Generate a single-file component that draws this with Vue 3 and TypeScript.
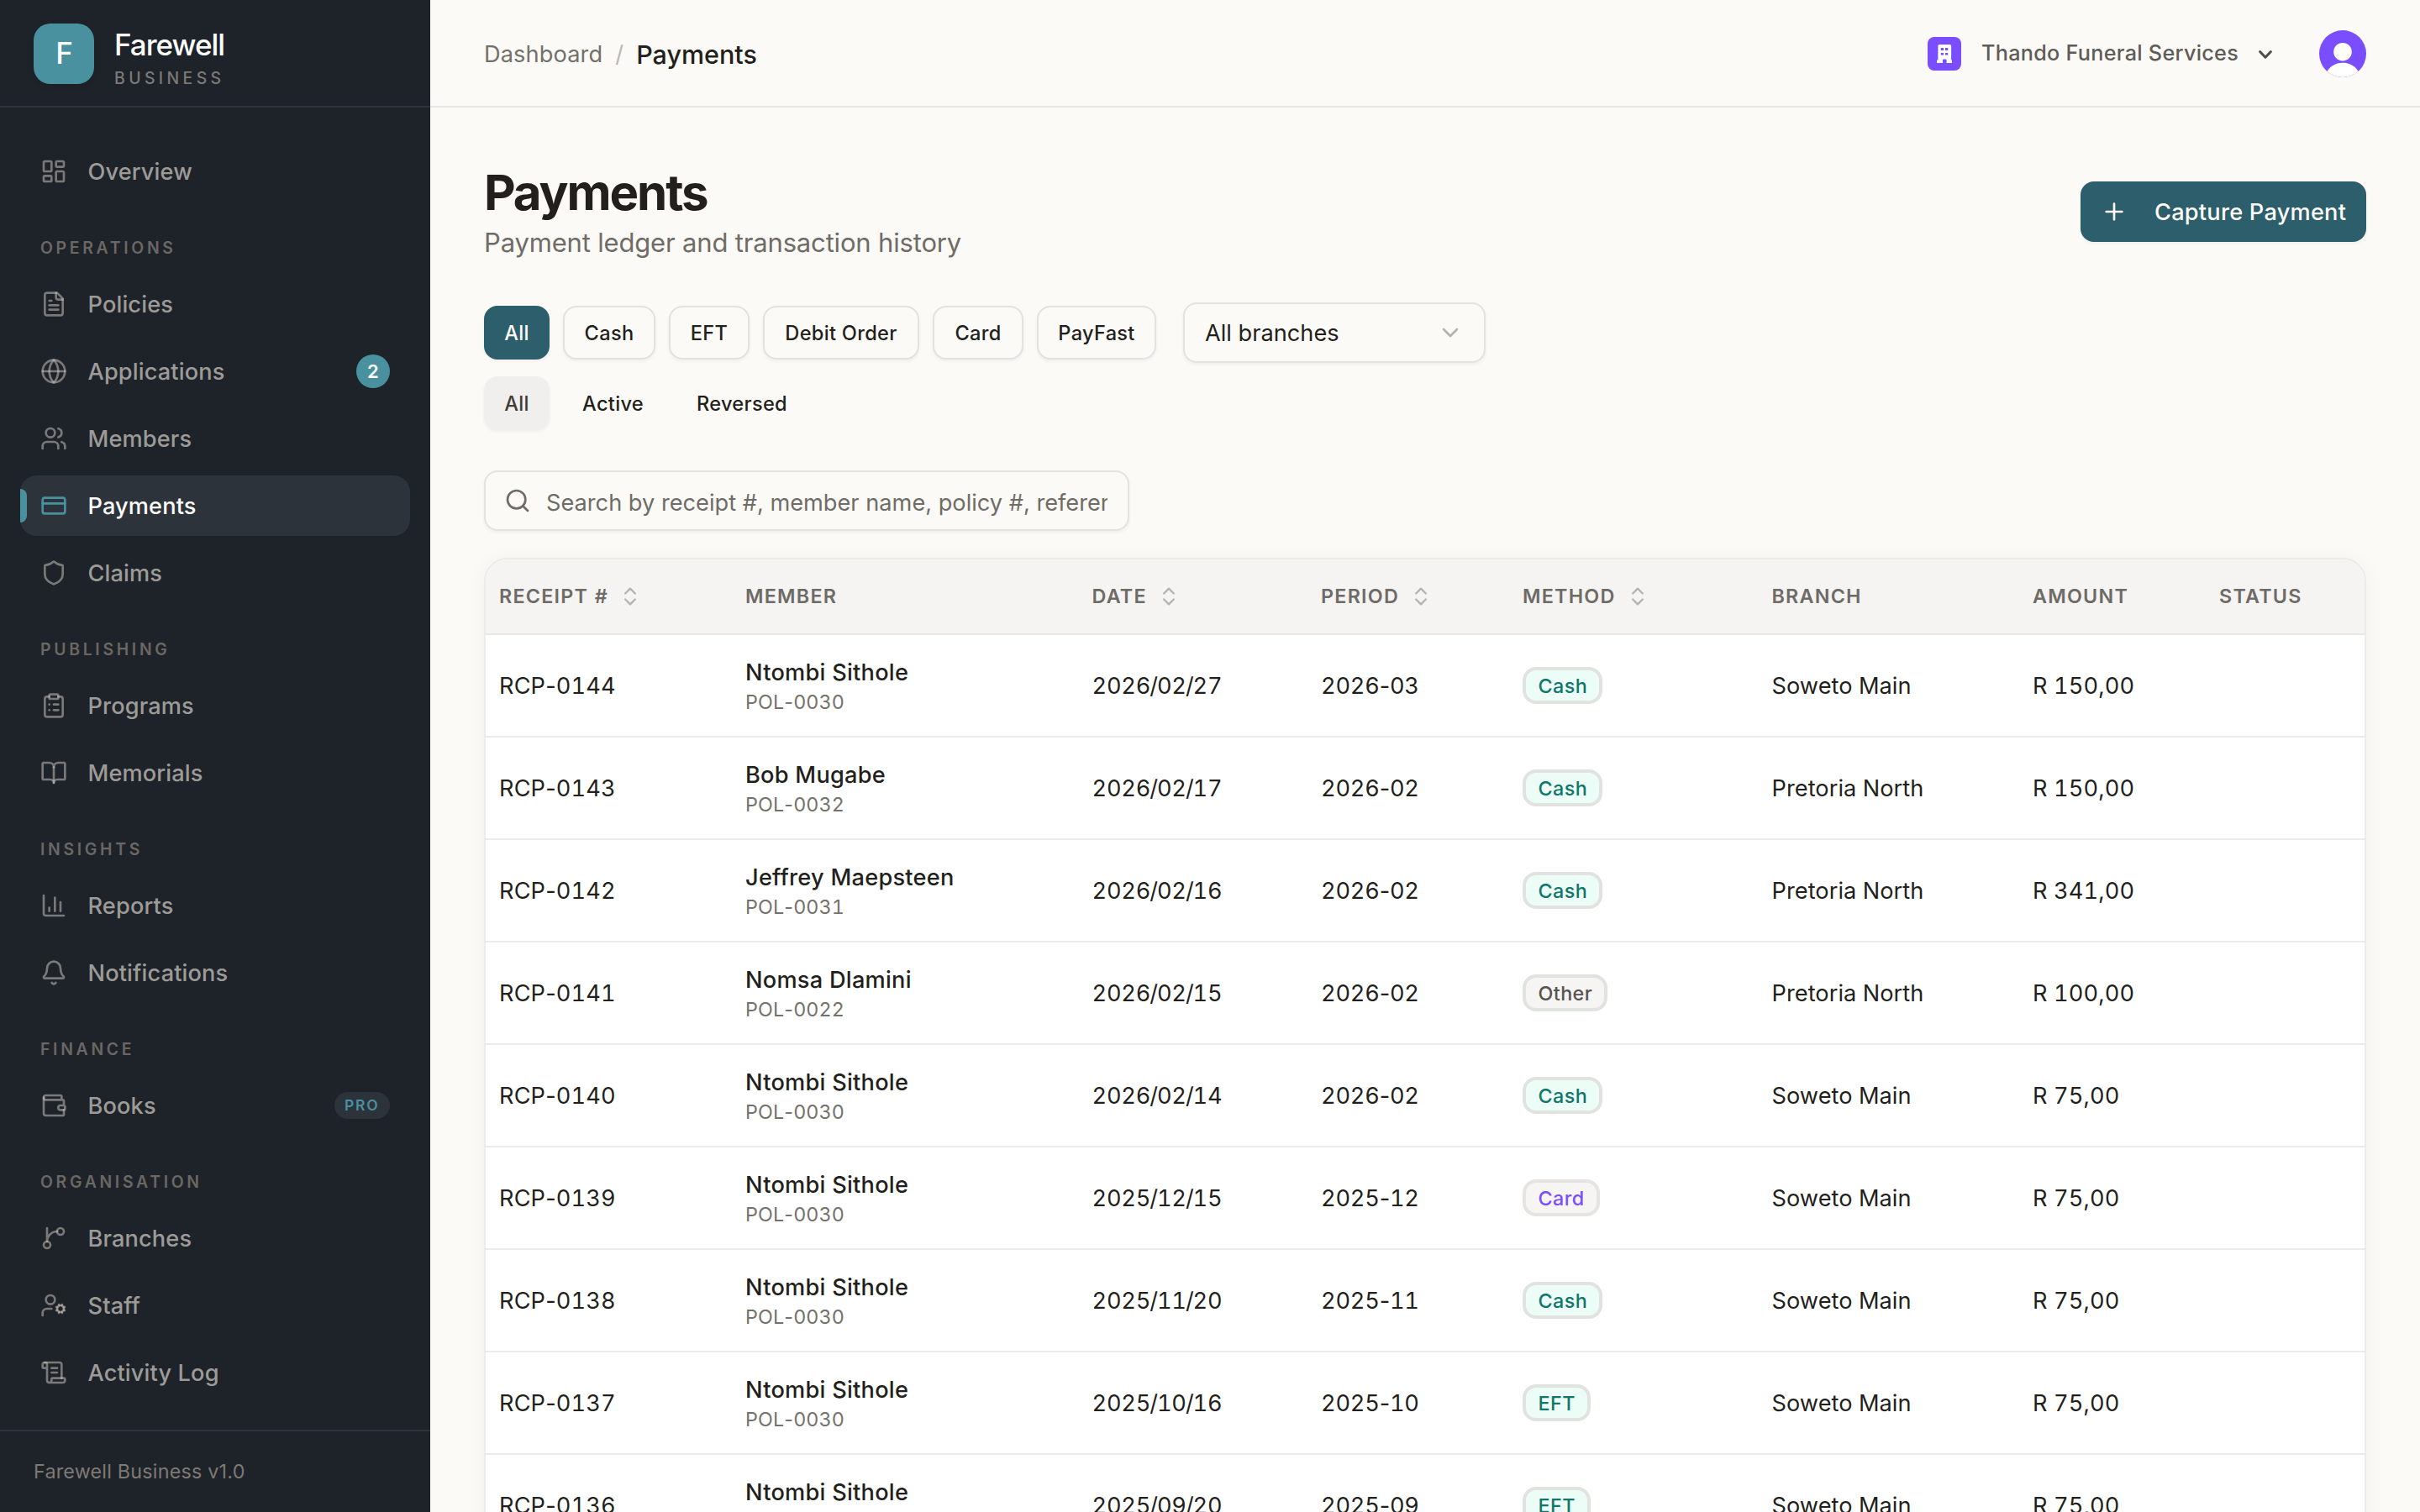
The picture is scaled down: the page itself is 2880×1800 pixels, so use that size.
<script setup lang="ts">
interface NavItem {
  label: string
  icon: string[]
  count?: number
  tag?: string
  active?: boolean
}
interface NavGroup {
  title?: string
  items: NavItem[]
}
type Method = 'Cash' | 'Other' | 'Card' | 'EFT'
interface Payment {
  receipt: string
  member: string
  policy: string
  date: string
  period: string
  method: Method
  branch: string
  amount: string
}

const groups: NavGroup[] = [
  {
    items: [
      {
        label: 'Overview',
        icon: [
          'M4 3h5a1 1 0 0 1 1 1v7a1 1 0 0 1-1 1H4a1 1 0 0 1-1-1V4a1 1 0 0 1 1-1z',
          'M15 3h5a1 1 0 0 1 1 1v3a1 1 0 0 1-1 1h-5a1 1 0 0 1-1-1V4a1 1 0 0 1 1-1z',
          'M15 12h5a1 1 0 0 1 1 1v7a1 1 0 0 1-1 1h-5a1 1 0 0 1-1-1v-7a1 1 0 0 1 1-1z',
          'M4 16h5a1 1 0 0 1 1 1v3a1 1 0 0 1-1 1H4a1 1 0 0 1-1-1v-3a1 1 0 0 1 1-1z',
        ],
      },
    ],
  },
  {
    title: 'OPERATIONS',
    items: [
      {
        label: 'Policies',
        icon: [
          'M15 2H6a2 2 0 0 0-2 2v16a2 2 0 0 0 2 2h12a2 2 0 0 0 2-2V7Z',
          'M14 2v4a2 2 0 0 0 2 2h4',
          'M10 9H8',
          'M16 13H8',
          'M16 17H8',
        ],
      },
      {
        label: 'Applications',
        count: 2,
        icon: [
          'M12 2a10 10 0 1 0 0 20a10 10 0 1 0 0-20z',
          'M12 2a14.5 14.5 0 0 0 0 20 14.5 14.5 0 0 0 0-20',
          'M2 12h20',
        ],
      },
      {
        label: 'Members',
        icon: [
          'M16 21v-2a4 4 0 0 0-4-4H6a4 4 0 0 0-4 4v2',
          'M9 3a4 4 0 1 0 0 8a4 4 0 1 0 0-8z',
          'M22 21v-2a4 4 0 0 0-3-3.87',
          'M16 3.13a4 4 0 0 1 0 7.75',
        ],
      },
      {
        label: 'Payments',
        active: true,
        icon: [
          'M4 5h16a2 2 0 0 1 2 2v10a2 2 0 0 1-2 2H4a2 2 0 0 1-2-2V7a2 2 0 0 1 2-2z',
          'M2 10h20',
        ],
      },
      {
        label: 'Claims',
        icon: [
          'M20 13c0 5-3.5 7.5-7.66 8.95a1 1 0 0 1-.67-.01C7.5 20.5 4 18 4 13V6a1 1 0 0 1 1-1c2 0 4.5-1.2 6.24-2.72a1.17 1.17 0 0 1 1.52 0C14.51 3.81 17 5 19 5a1 1 0 0 1 1 1z',
        ],
      },
    ],
  },
  {
    title: 'PUBLISHING',
    items: [
      {
        label: 'Programs',
        icon: [
          'M9 2h6a1 1 0 0 1 1 1v2a1 1 0 0 1-1 1H9a1 1 0 0 1-1-1V3a1 1 0 0 1 1-1z',
          'M16 4h2a2 2 0 0 1 2 2v14a2 2 0 0 1-2 2H6a2 2 0 0 1-2-2V6a2 2 0 0 1 2-2h2',
          'M12 11h4',
          'M12 16h4',
          'M8 11h.01',
          'M8 16h.01',
        ],
      },
      {
        label: 'Memorials',
        icon: [
          'M12 7v14',
          'M3 18a1 1 0 0 1-1-1V4a1 1 0 0 1 1-1h5a4 4 0 0 1 4 4 4 4 0 0 1 4-4h5a1 1 0 0 1 1 1v13a1 1 0 0 1-1 1h-6a3 3 0 0 0-3 3 3 3 0 0 0-3-3z',
        ],
      },
    ],
  },
  {
    title: 'INSIGHTS',
    items: [
      {
        label: 'Reports',
        icon: ['M3 3v16a2 2 0 0 0 2 2h16', 'M18 17V9', 'M13 17V5', 'M8 17v-3'],
      },
      {
        label: 'Notifications',
        icon: [
          'M10.268 21a2 2 0 0 0 3.464 0',
          'M3.262 15.326A1 1 0 0 0 4 17h16a1 1 0 0 0 .74-1.673C19.41 13.956 18 12.499 18 8A6 6 0 0 0 6 8c0 4.499-1.411 5.956-2.738 7.326',
        ],
      },
    ],
  },
  {
    title: 'FINANCE',
    items: [
      {
        label: 'Books',
        tag: 'PRO',
        icon: [
          'M19 7V4a1 1 0 0 0-1-1H5a2 2 0 0 0 0 4h15a1 1 0 0 1 1 1v4h-3a2 2 0 0 0 0 4h3a1 1 0 0 0 1-1v-2a1 1 0 0 0-1-1',
          'M3 5v14a2 2 0 0 0 2 2h15a1 1 0 0 0 1-1v-4',
        ],
      },
    ],
  },
  {
    title: 'ORGANISATION',
    items: [
      {
        label: 'Branches',
        icon: [
          'M15 6a9 9 0 0 0-9 9V3',
          'M18 3a3 3 0 1 0 0 6a3 3 0 1 0 0-6z',
          'M6 15a3 3 0 1 0 0 6a3 3 0 1 0 0-6z',
        ],
      },
      {
        label: 'Staff',
        icon: [
          'M10 15H6a4 4 0 0 0-4 4v2',
          'M9 3a4 4 0 1 0 0 8a4 4 0 1 0 0-8z',
          'M18 12a3 3 0 1 0 0 6a3 3 0 1 0 0-6z',
          'm14.305 16.53.923-.382',
          'm15.228 13.852-.923-.383',
          'm16.852 12.228-.383-.923',
          'm16.852 17.772-.383.924',
          'm19.148 12.228.383-.923',
          'm19.53 18.696-.382-.924',
          'm20.772 13.852.924-.383',
          'm20.772 16.148.924.383',
        ],
      },
      {
        label: 'Activity Log',
        icon: [
          'M15 12h-5',
          'M15 8h-5',
          'M19 17V5a2 2 0 0 0-2-2H4',
          'M8 21h12a2 2 0 0 0 2-2v-1a1 1 0 0 0-1-1H11a1 1 0 0 0-1 1v1a2 2 0 1 1-4 0V5a2 2 0 1 0-4 0v2a1 1 0 0 0 1 1h3',
        ],
      },
    ],
  },
]

const methods = [
  { label: 'All', width: 78 },
  { label: 'Cash', width: 110 },
  { label: 'EFT', width: 96 },
  { label: 'Debit Order', width: 186 },
  { label: 'Card', width: 108 },
  { label: 'PayFast', width: 142 },
]
const states = [
  { label: 'All', width: 78 },
  { label: 'Active', width: 119 },
  { label: 'Reversed', width: 156 },
]

const columns = [
  { label: 'RECEIPT #', sortable: true },
  { label: 'MEMBER', sortable: false },
  { label: 'DATE', sortable: true },
  { label: 'PERIOD', sortable: true },
  { label: 'METHOD', sortable: true },
  { label: 'BRANCH', sortable: false },
  { label: 'AMOUNT', sortable: false },
  { label: 'STATUS', sortable: false },
]

function pay(
  receipt: string,
  member: string,
  policy: string,
  date: string,
  period: string,
  method: Method,
  branch: string,
  amount: string,
): Payment {
  return { receipt, member, policy, date, period, method, branch, amount }
}

const payments: Payment[] = [
  pay('RCP-0144', 'Ntombi Sithole', 'POL-0030', '2026/02/27', '2026-03', 'Cash', 'Soweto Main', 'R 150,00'),
  pay('RCP-0143', 'Bob Mugabe', 'POL-0032', '2026/02/17', '2026-02', 'Cash', 'Pretoria North', 'R 150,00'),
  pay('RCP-0142', 'Jeffrey Maepsteen', 'POL-0031', '2026/02/16', '2026-02', 'Cash', 'Pretoria North', 'R 341,00'),
  pay('RCP-0141', 'Nomsa Dlamini', 'POL-0022', '2026/02/15', '2026-02', 'Other', 'Pretoria North', 'R 100,00'),
  pay('RCP-0140', 'Ntombi Sithole', 'POL-0030', '2026/02/14', '2026-02', 'Cash', 'Soweto Main', 'R 75,00'),
  pay('RCP-0139', 'Ntombi Sithole', 'POL-0030', '2025/12/15', '2025-12', 'Card', 'Soweto Main', 'R 75,00'),
  pay('RCP-0138', 'Ntombi Sithole', 'POL-0030', '2025/11/20', '2025-11', 'Cash', 'Soweto Main', 'R 75,00'),
  pay('RCP-0137', 'Ntombi Sithole', 'POL-0030', '2025/10/16', '2025-10', 'EFT', 'Soweto Main', 'R 75,00'),
  pay('RCP-0136', 'Ntombi Sithole', 'POL-0030', '2025/09/20', '2025-09', 'EFT', 'Soweto Main', 'R 75,00'),
]

// Digits are tabular; separators keep their proportional width.
function parts(text: string): string[] {
  return text.split(/([-/])/)
}
function isSeparator(part: string): boolean {
  return part === '-' || part === '/'
}
</script>

<template>
  <div class="app">
    <aside class="sidebar">
      <div class="brand">
        <div class="brand-mark">F</div>
        <div class="brand-text">
          <div class="brand-name">Farewell</div>
          <div class="brand-sub">BUSINESS</div>
        </div>
      </div>
      <nav class="nav">
        <section v-for="(g, gi) in groups" :key="gi" class="group">
          <h2 v-if="g.title" class="group-title">{{ g.title }}</h2>
          <a v-for="n in g.items" :key="n.label" class="nav-item" :class="{ active: n.active }">
            <svg class="icon" viewBox="0 0 24 24">
              <path v-for="(d, i) in n.icon" :key="i" :d="d" />
            </svg>
            <span class="nav-label">{{ n.label }}</span>
            <span v-if="n.count" class="count">{{ n.count }}</span>
            <span v-if="n.tag" class="tag">{{ n.tag }}</span>
          </a>
        </section>
      </nav>
      <div class="sidebar-foot">Farewell Business v1.0</div>
    </aside>

    <div class="content">
      <header class="topbar">
        <div class="crumbs">
          <span class="crumb">Dashboard</span>
          <span class="slash">/</span>
          <span class="crumb-current">Payments</span>
        </div>
        <div class="account">
          <svg class="org" viewBox="0 0 40 40">
            <rect width="40" height="40" rx="8" fill="#7a4dff" />
            <path
              fill="#fff"
              fill-rule="evenodd"
              d="M14 9h12.5a1.6 1.6 0 0 1 1.6 1.6V27.6H29V31H22.6V27.4a1 1 0 0 0-1-1h-2.6a1 1 0 0 0-1 1V31H11V27.6h1.4V10.6A1.6 1.6 0 0 1 14 9zM15.8 13v3h3.2v-3zM21 13v3h3.2v-3zM15.8 19v2.6h3.2V19zM21 19v2.6h3.2V19z"
            />
          </svg>
          <span class="org-name">Thando Funeral Services</span>
          <svg class="org-caret" viewBox="0 0 20 14"><path d="M3.6 3.5 10 10.2l6.4-6.7" /></svg>
          <svg class="avatar" viewBox="0 0 56 56">
            <defs>
              <clipPath id="avatar-clip"><circle cx="28" cy="28" r="28" /></clipPath>
            </defs>
            <g clip-path="url(#avatar-clip)">
              <rect width="56" height="56" fill="#7a4dff" />
              <circle cx="28" cy="25.7" r="10.8" fill="#fff" />
              <path d="M8 52c3.5-8.6 11-13.2 20-13.2S44.500 43.400 48 52v6H8z" fill="#fff" />
            </g>
          </svg>
        </div>
      </header>

      <main class="main">
        <div class="page-head">
          <div>
            <h1 class="title">Payments</h1>
            <p class="subtitle">Payment ledger and transaction history</p>
          </div>
          <button class="primary">
            <svg class="icon" viewBox="0 0 24 24"><path d="M5 12h14" /><path d="M12 5v14" /></svg>
            <span>Capture Payment</span>
          </button>
        </div>

        <div class="filters">
          <div class="filter-row">
            <button
              v-for="(m, i) in methods"
              :key="m.label"
              class="chip"
              :class="{ selected: i === 0 }"
              :style="{ width: m.width + 'px' }"
            >
              {{ m.label }}
            </button>
            <div class="select">
              <span>All branches</span>
              <svg class="icon" viewBox="0 0 24 24"><path d="m6 9 6 6 6-6" /></svg>
            </div>
          </div>
          <div class="filter-row">
            <button
              v-for="(s, i) in states"
              :key="s.label"
              class="chip ghost"
              :class="{ current: i === 0 }"
              :style="{ width: s.width + 'px' }"
            >
              {{ s.label }}
            </button>
          </div>
        </div>

        <div class="search">
          <svg class="icon" viewBox="0 0 24 24"><circle cx="11" cy="11" r="8" /><path d="m21 21-4.300-4.300" /></svg>
          <span class="search-text">Search by receipt #, member name, policy #, reference…</span>
        </div>

        <div class="table">
          <div class="row head">
            <div v-for="c in columns" :key="c.label" class="cell th">
              <span>{{ c.label }}</span>
              <svg v-if="c.sortable" class="sort" viewBox="0 0 24 24">
                <path d="m7 15 5 5 5-5" />
                <path d="m7 9 5-5 5 5" />
              </svg>
            </div>
          </div>
          <div v-for="p in payments" :key="p.receipt" class="row">
            <div class="cell code">
              <span v-for="(t, i) in parts(p.receipt)" :key="i" :class="{ sep: isSeparator(t) }">{{ t }}</span>
            </div>
            <div class="cell member">
              <div class="member-name">{{ p.member }}</div>
              <div class="member-policy">
                <span v-for="(t, i) in parts(p.policy)" :key="i" :class="{ sep: isSeparator(t) }">{{ t }}</span>
              </div>
            </div>
            <div class="cell date">
              <span v-for="(t, i) in parts(p.date)" :key="i" :class="{ sep: isSeparator(t) }">{{ t }}</span>
            </div>
            <div class="cell period">
              <span v-for="(t, i) in parts(p.period)" :key="i" :class="{ sep: isSeparator(t) }">{{ t }}</span>
            </div>
            <div class="cell">
              <span class="badge" :class="'m-' + p.method.toLowerCase()">{{ p.method }}</span>
            </div>
            <div class="cell branch">{{ p.branch }}</div>
            <div class="cell amount">{{ p.amount }}</div>
            <div class="cell"></div>
          </div>
        </div>
      </main>
    </div>
  </div>
</template>

<style>
html,
body {
  margin: 0;
  background: #fcfaf6;
}
</style>

<style scoped>
* {
  box-sizing: border-box;
}
.app {
  display: flex;
  width: 2880px;
  height: 1800px;
  overflow: hidden;
  background: #fcfaf6;
  color: #231f1c;
  font-family: "Inter", "Liberation Sans", sans-serif;
  font-size: 27.2px;
  white-space: nowrap;
}
h1,
h2,
p {
  margin: 0;
}
button {
  font-family: inherit;
  border: 0;
  margin: 0;
}
svg {
  flex: none;
  display: block;
}
.icon {
  width: 32px;
  height: 32px;
  fill: none;
  stroke: currentColor;
  stroke-width: 2;
  stroke-linecap: round;
  stroke-linejoin: round;
}

/* Sidebar */
.sidebar {
  flex: none;
  width: 512px;
  display: flex;
  flex-direction: column;
  background: #1e2329;
}
.brand {
  flex: none;
  height: 128px;
  display: flex;
  align-items: flex-start;
  gap: 24px;
  padding: 28px 40px 0;
  border-bottom: 2px solid #2d323b;
}
.brand-mark {
  width: 72px;
  height: 72px;
  border-radius: 20px;
  background: #4a919f;
  color: #fdfcfa;
  font-size: 35px;
  font-weight: 500;
  line-height: 70px;
  text-align: center;
  padding-left: 1px;
  box-shadow: 0 2px 6px rgba(0, 0, 0, 0.1);
}
.brand-name {
  font-size: 35px;
  font-weight: 500;
  line-height: 50px;
  letter-spacing: -1.02px;
  color: #fdfcfa;
}
.brand-sub {
  font-size: 19.4px;
  font-weight: 500;
  line-height: 30px;
  letter-spacing: 4.4px;
  color: #7d7975;
}
.nav {
  flex: 1;
  padding: 40px 24px 0;
}
.group {
  display: flex;
  flex-direction: column;
  gap: 8px;
}
.group + .group {
  margin-top: 40px;
}
.group-title {
  margin-bottom: 8px;
  padding-left: 24px;
  font-size: 19.4px;
  font-weight: 600;
  line-height: 31px;
  height: 30px;
  letter-spacing: 3.7px;
  color: #6b6762;
}
.nav-item {
  position: relative;
  height: 72px;
  display: flex;
  align-items: center;
  gap: 24.5px;
  padding: 0 24px;
  border-radius: 20px;
  color: #9d9b98;
  font-weight: 500;
  letter-spacing: 0.12px;
}
.nav-item .icon {
  stroke: rgba(214, 208, 200, 0.5);
}
.nav-label {
  flex: 1;
}
.nav-item.active {
  background: #2d333a;
  color: #fdfcfa;
}
.nav-item.active .icon {
  stroke: #4a919f;
}
.nav-item.active::before {
  content: "";
  position: absolute;
  left: 0;
  top: 16px;
  width: 8px;
  height: 40px;
  border-radius: 0 8px 8px 0;
  background: #4a919f;
}
.count {
  width: 40px;
  height: 40px;
  border-radius: 20px;
  background: #4a919f;
  color: #fdfcfa;
  font-size: 22px;
  font-weight: 600;
  line-height: 40px;
  text-align: center;
}
.tag {
  width: 66px;
  height: 32px;
  border-radius: 16px;
  background: #2d333a;
  color: #4a919f;
  font-size: 17.5px;
  font-weight: 600;
  line-height: 32px;
  letter-spacing: 1.8px;
  padding-left: 12px;
}
.sidebar-foot {
  flex: none;
  height: 98px;
  border-top: 2px solid #2d323b;
  padding-left: 40px;
  font-size: 23.3px;
  line-height: 96px;
  letter-spacing: 0.22px;
  color: #7d7975;
}

/* Top bar */
.content {
  flex: 1;
  min-width: 0;
}
.topbar {
  height: 128px;
  display: flex;
  align-items: center;
  justify-content: space-between;
  padding: 0 64px;
  border-bottom: 2px solid #e8e7e5;
}
.crumbs {
  display: flex;
  align-items: center;
  padding-top: 2px;
}
.crumb {
  letter-spacing: 0.1px;
  color: #73706b;
}
.slash {
  width: 40px;
  text-align: center;
  color: #bab7b4;
}
.crumb-current {
  font-size: 30.5px;
  font-weight: 500;
}
.account {
  display: flex;
  align-items: center;
  padding-top: 2px;
}
.org {
  width: 40px;
  height: 40px;
}
.org-name {
  width: 307px;
  margin: -2px 0 0 24px;
  font-size: 25.2px;
  font-weight: 500;
  letter-spacing: 0.28px;
  color: #5f5c58;
}
.org-caret {
  width: 20px;
  height: 14px;
  margin: 2px 54px 0 21px;
  fill: none;
  stroke: #504c48;
  stroke-width: 3;
  stroke-linecap: round;
  stroke-linejoin: round;
}
.avatar {
  width: 56px;
  height: 56px;
}

/* Page */
.main {
  padding: 64px 64px 0;
}
.page-head {
  display: flex;
  align-items: center;
  justify-content: space-between;
}
.title {
  font-size: 58.2px;
  font-weight: 700;
  line-height: 75px;
  letter-spacing: -2.1px;
}
.subtitle {
  height: 45px;
  font-size: 31px;
  line-height: 43px;
  letter-spacing: -0.17px;
  color: #6f6c67;
}
.primary {
  width: 340px;
  height: 72px;
  display: flex;
  align-items: center;
  gap: 32px;
  padding: 0 0 0 24px;
  border-radius: 16px;
  background: #2c5f6b;
  color: #fdfbf7;
  font-size: 27.2px;
  font-weight: 500;
  letter-spacing: 0.23px;
  box-shadow: 0 2px 4px rgba(0, 0, 0, 0.05);
}
.filters {
  display: flex;
  flex-direction: column;
  gap: 16px;
  margin-top: 48px;
}
.filter-row {
  display: flex;
  align-items: center;
  gap: 16px;
}
.chip {
  height: 64px;
  padding: 0;
  border: 2px solid #e0e3e0;
  border-radius: 16px;
  background: #fcfaf7;
  color: #231f1c;
  font-size: 23.6px;
  font-weight: 500;
  letter-spacing: 0.3px;
  text-align: center;
  box-shadow: 0 2px 4px rgba(0, 0, 0, 0.05);
}
.chip.selected {
  border-color: #2c5f6b;
  background: #2c5f6b;
  color: #fdfbf7;
}
.chip.ghost {
  border-color: transparent;
  background: transparent;
  box-shadow: none;
}
.chip.ghost.current {
  border-color: #f0efed;
  background: #f0efed;
  color: #403c39;
  box-shadow: 0 2px 4px rgba(0, 0, 0, 0.05);
}
.select {
  width: 360px;
  height: 72px;
  margin-left: 16px;
  display: flex;
  align-items: center;
  justify-content: space-between;
  padding: 0 24px;
  border: 2px solid #e0e3e0;
  border-radius: 16px;
  box-shadow: 0 2px 4px rgba(0, 0, 0, 0.05);
}
.select .icon {
  color: #b5b3b0;
}
.search {
  width: 768px;
  height: 72px;
  margin-top: 48px;
  display: flex;
  align-items: center;
  gap: 18px;
  padding: 0 24px 0 22px;
  border: 2px solid #e0e3e0;
  border-radius: 16px;
  color: #6f6c67;
  box-shadow: 0 2px 4px rgba(0, 0, 0, 0.05);
}
.search-text {
  flex: 1;
  min-width: 0;
  padding-top: 5px;
  overflow: hidden;
  line-height: 40px;
}

/* Table */
.table {
  margin-top: 32px;
  border: 2px solid #ecebe9;
  border-radius: 28px;
  overflow: hidden;
  background: #fff;
  box-shadow: 0 4px 24px rgba(60, 50, 40, 0.05);
}
.row {
  display: grid;
  grid-template-columns: 293fr 412.5fr 272.5fr 240fr 296.5fr 310.5fr 222fr 189fr;
  align-items: center;
  height: 122px;
  border-bottom: 2px solid #ebebeb;
  font-feature-settings: "tnum";
}
.row.head {
  height: 90px;
  background: #f5f4f2;
  border-bottom-color: #e8e7e5;
}
.cell {
  padding: 0 16px;
  letter-spacing: 0.13px;
}
.cell.branch {
  letter-spacing: 0.05px;
}
.cell.date,
.cell.period {
  letter-spacing: -0.22px;
}
.sep {
  font-feature-settings: normal;
}
.date .sep {
  margin: 0 -0.9px;
}
.th {
  display: flex;
  align-items: center;
  gap: 12px;
  padding-bottom: 2px;
  font-size: 23.3px;
  font-weight: 600;
  letter-spacing: 1.25px;
  color: #6e6b66;
}
.sort {
  width: 28px;
  height: 28px;
  margin-top: 1px;
  fill: none;
  stroke: #b5b3b0;
  stroke-width: 2;
  stroke-linecap: round;
  stroke-linejoin: round;
}
.member-name {
  padding-top: 1px;
  font-weight: 500;
  line-height: 40px;
  letter-spacing: 0.24px;
}
.member-policy {
  height: 31px;
  font-size: 23.3px;
  line-height: 29px;
  color: #75726d;
}
.badge {
  display: inline-flex;
  align-items: center;
  height: 44px;
  padding: 0 14.200px 0 14.600px;
  border: 4px solid #e0e3e0;
  border-radius: 16px;
  font-size: 23.3px;
  font-weight: 500;
  letter-spacing: 0.4px;
  vertical-align: middle;
}
.badge.m-cash,
.badge.m-eft {
  background: #ecfdf8;
  color: #0f766a;
}
.badge.m-other {
  background: #f6f5f4;
  color: #57534e;
}
.badge.m-card {
  border-color: #e5e4e2;
  background: #f7f5f4;
  color: #7a4dff;
}
</style>
